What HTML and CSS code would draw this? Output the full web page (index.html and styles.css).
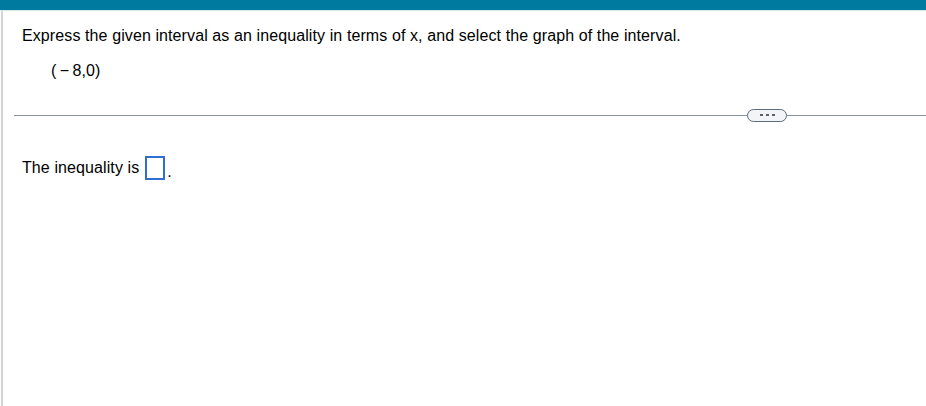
FILE: index.html
```html
<!DOCTYPE html>
<html>
<head>
<meta charset="utf-8">
<link rel="stylesheet" href="styles.css">
</head>
<body>
<div class="topbar"></div>
<div class="page">
  <div class="question">
    <p class="prompt">Express the given interval as an inequality in terms of x, and select the graph of the interval.</p>
    <p class="interval">(&thinsp;&minus;&thinsp;8,0)</p>
  </div>
  <div class="divider">
    <span class="rule rule-left"></span>
    <span class="more"><span class="dot"></span><span class="dot"></span><span class="dot"></span></span>
    <span class="rule rule-right"></span>
  </div>
  <div class="answer">
    <span>The inequality is</span>
    <span class="input-box"></span><span class="period">.</span>
  </div>
</div>
</body>
</html>
```

FILE: styles.css
```css
html, body {
  margin: 0;
  padding: 0;
  background: #ffffff;
}
body {
  width: 926px;
  height: 406px;
  overflow: hidden;
  font-family: "Liberation Sans", Arial, sans-serif;
  font-size: 16px;
  letter-spacing: 0.1px;
  color: #000000;
}
.topbar {
  height: 10px;
  background: #007a9e;
  border-bottom: 1px solid #d6e9ef;
}
.page {
  margin-left: 1px;
  border-left: 2px solid #d4d4dc;
  height: 395px;
  padding-top: 1px;
}
.question {
  padding-left: 19px;
}
.prompt {
  margin: 0;
  padding-top: 15px;
  line-height: 18px;
}
.interval {
  margin: 0;
  padding-top: 17px;
  padding-left: 29px;
  line-height: 18px;
}
.divider {
  display: flex;
  align-items: center;
  margin-top: 28px;
  margin-left: 11px;
  height: 14px;
}
.rule {
  height: 1px;
  background: #8a95a3;
}
.rule-left {
  width: 733px;
}
.rule-right {
  flex: 1;
}
.more {
  width: 38px;
  height: 11px;
  border: 1px solid #5d6b79;
  border-radius: 7px;
  background: #f2f4f7;
  display: flex;
  align-items: center;
  justify-content: center;
  gap: 3px;
}
.dot {
  width: 3px;
  height: 2px;
  background: #56616d;
}
.answer {
  display: flex;
  align-items: center;
  padding-left: 19px;
  margin-top: 34px;
  line-height: 18px;
}
.input-box {
  display: inline-block;
  width: 16px;
  height: 20px;
  border: 2px solid #2f6fd3;
  margin-left: 6px;
}
.period {
  align-self: flex-end;
  margin-left: 2px;
  line-height: 16px;
}
```
